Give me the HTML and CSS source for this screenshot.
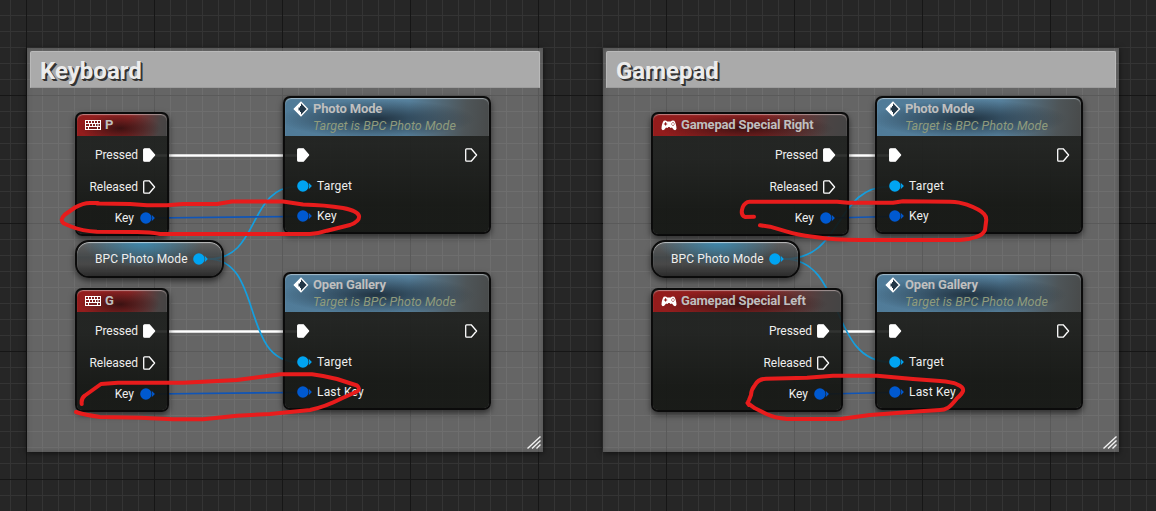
FILE: index.html
```html
<!DOCTYPE html>
<html lang="en">
<head>
<meta charset="utf-8">
<title>Event Graph</title>
<link rel="stylesheet" href="styles.css">
</head>
<body>
<svg class="defs" width="0" height="0" aria-hidden="true">
  <symbol id="exec" viewBox="0 0 13 14"><path d="M1.600 .8H6.200L11.600 7 6.200 13.200H1.600Q.7 13.200 .7 12.300V1.700Q.7.8 1.600.8Z" stroke="#fff" stroke-width="1.300" stroke-linejoin="round"/></symbol>
  <symbol id="data" viewBox="0 0 15 12"><circle cx="5.900" cy="6" r="5.700"/><path d="M11.700 2.700 14.900 6 11.700 9.300Q12.700 6 11.700 2.700Z"/></symbol>
  <symbol id="keyboard" viewBox="0 0 16 10"><path fill="#fff" fill-rule="evenodd" d="M0 0H16V10H0ZM1 1V3H3V1ZM4 1V3H6V1ZM7 1V3H9V1ZM10 1V3H12V1ZM13 1V3H15V1ZM1 4V6H4V4ZM5 4V6H7V4ZM8 4V6H10V4ZM11 4V6H12.500V4ZM13.500 4V6H15V4ZM1 7V9H3V7ZM4 7V9H12V7ZM13 7V9H15V7Z"/></symbol>
  <symbol id="gamepad" viewBox="0 0 16 11"><path fill="#fff" fill-rule="evenodd" d="M2.700.8Q4.800-.2 6.200 1.500H9.800Q11.200-.2 13.300.8C14.500 2.200 15.500 6 15.500 8.700Q14.800 11 12.800 9.700L10.900 7.600Q9.500 8.600 8.600 7H7.400Q6.500 8.600 5.100 7.600L3.200 9.700Q1.200 11 .5 8.700C.5 6 1.500 2.200 2.700.8ZM4 2.300V3.400H2.900V4.500H4V5.600H5.100V4.500H6.200V3.400H5.100V2.300ZM11.500 2V3H12.500V2ZM10.200 3.500V4.500H11.200V3.500ZM12.700 3.500V4.500H13.700V3.500ZM11.500 5V6H12.500V5Z"/></symbol>
  <symbol id="event" viewBox="0 0 16 16"><path d="M8 1.300 14.500 8 8 14.700 1.300 8Z" fill="#233747" stroke="#fff" stroke-width="1.300"/><path d="M8 1V5H7V6.500H5.500V9.500H7V11H8V15L1 8Z" fill="#fff"/></symbol>
</svg>

<main class="graph">
  <section class="comment comment-left"><h2>Keyboard</h2><svg class="grip" viewBox="0 0 14 13"><path d="M.5 12.500 13.500.5M5 12.500 13.500 4.500M9.500 12.500 13.500 8.500"/></svg></section>
  <section class="comment comment-right"><h2>Gamepad</h2><svg class="grip" viewBox="0 0 14 13"><path d="M.5 12.500 13.500.5M5 12.500 13.500 4.500M9.500 12.500 13.500 8.500"/></svg></section>

  <svg class="layer wires" viewBox="0 0 1156 511">
    <g class="wire-exec"><path d="M154 155.500H298M154 331.500H298M834 155.500H890M828 331.500H890"/></g>
    <g class="wire-object">
      <path d="M208 259C262 259 246 186.500 298 186.500"/><path d="M208 259C264 259 240 362 298 362"/>
      <path d="M784 259C845 259 833 186.500 890 186.500"/><path d="M784 259C846 259 828 362 890 362"/>
    </g>
    <g class="wire-key"><path d="M152 218 298 216.500M152 394 298 392.500M832 218 890 216.500M826 394 890 392.500"/></g>
  </svg>

  <article class="node event k-p">
    <header><svg class="kb"><use href="#keyboard"/></svg><b>P</b></header>
    <div class="row">Pressed<svg class="exec on"><use href="#exec"/></svg></div>
    <div class="row">Released<svg class="exec"><use href="#exec"/></svg></div>
    <div class="row">Key<svg class="data key"><use href="#data"/></svg></div>
  </article>
  <article class="node call c-photo-l">
    <header><svg class="ev"><use href="#event"/></svg><div><b>Photo Mode</b><i>Target is BPC Photo Mode</i></div></header>
    <div class="row execs"><svg class="exec on"><use href="#exec"/></svg><svg class="exec"><use href="#exec"/></svg></div>
    <div class="row"><svg class="data object"><use href="#data"/></svg>Target</div>
    <div class="row"><svg class="data key"><use href="#data"/></svg>Key</div>
  </article>
  <article class="pill v-left">BPC Photo Mode<svg class="data object"><use href="#data"/></svg></article>
  <article class="node event k-g">
    <header><svg class="kb"><use href="#keyboard"/></svg><b>G</b></header>
    <div class="row">Pressed<svg class="exec on"><use href="#exec"/></svg></div>
    <div class="row">Released<svg class="exec"><use href="#exec"/></svg></div>
    <div class="row">Key<svg class="data key"><use href="#data"/></svg></div>
  </article>
  <article class="node call c-open-l">
    <header><svg class="ev"><use href="#event"/></svg><div><b>Open Gallery</b><i>Target is BPC Photo Mode</i></div></header>
    <div class="row execs"><svg class="exec on"><use href="#exec"/></svg><svg class="exec"><use href="#exec"/></svg></div>
    <div class="row"><svg class="data object"><use href="#data"/></svg>Target</div>
    <div class="row"><svg class="data key"><use href="#data"/></svg>Last Key</div>
  </article>

  <article class="node event g-right">
    <header><svg class="gp"><use href="#gamepad"/></svg><b>Gamepad Special Right</b></header>
    <div class="row">Pressed<svg class="exec on"><use href="#exec"/></svg></div>
    <div class="row">Released<svg class="exec"><use href="#exec"/></svg></div>
    <div class="row">Key<svg class="data key"><use href="#data"/></svg></div>
  </article>
  <article class="node call c-photo-r">
    <header><svg class="ev"><use href="#event"/></svg><div><b>Photo Mode</b><i>Target is BPC Photo Mode</i></div></header>
    <div class="row execs"><svg class="exec on"><use href="#exec"/></svg><svg class="exec"><use href="#exec"/></svg></div>
    <div class="row"><svg class="data object"><use href="#data"/></svg>Target</div>
    <div class="row"><svg class="data key"><use href="#data"/></svg>Key</div>
  </article>
  <article class="pill v-right">BPC Photo Mode<svg class="data object"><use href="#data"/></svg></article>
  <article class="node event g-left">
    <header><svg class="gp"><use href="#gamepad"/></svg><b>Gamepad Special Left</b></header>
    <div class="row">Pressed<svg class="exec on"><use href="#exec"/></svg></div>
    <div class="row">Released<svg class="exec"><use href="#exec"/></svg></div>
    <div class="row">Key<svg class="data key"><use href="#data"/></svg></div>
  </article>
  <article class="node call c-open-r">
    <header><svg class="ev"><use href="#event"/></svg><div><b>Open Gallery</b><i>Target is BPC Photo Mode</i></div></header>
    <div class="row execs"><svg class="exec on"><use href="#exec"/></svg><svg class="exec"><use href="#exec"/></svg></div>
    <div class="row"><svg class="data object"><use href="#data"/></svg>Target</div>
    <div class="row"><svg class="data key"><use href="#data"/></svg>Last Key</div>
  </article>

  <svg class="layer marks" viewBox="0 0 1156 511">
    <path d="M98 203H90Q83 203 75 207.500L65 214.500Q59 220 64 223.500L71 226.500Q82 231 97 231.700L137 232Q150 232 160 234H310Q319 233.500 327 230.700L350 225Q360 221 359 216Q358 211 343 208Q325 205 303 204.500L283 201.500H232L217 204H183L167 205.300H147L130 204 97 203.500"/>
    <path d="M81.700 404Q81 398 85 395.500L101 384 118 382.700H183L203 381.700 237 380 277 374.700 281 374.300H312Q325 376 337 379L357 385.500Q361 389 357 391.500L342 398.300Q325 407 310 410L270 414 237 415.700 203 419.300H173L140 417.700 100 417Q85 415 76 412"/>
    <path d="M754 216.700 745 217Q740 215 742.700 207.300 745 202 749.500 201.700H837L848 202.700H893L903 201.300 950 201.700Q960 202 967 204.700 980 209.500 984 214 987 217 986 222L985 230Q983 235 976 237 968 240 960 240H860Q835 240 813 236.700 797 235 787 231.700L770 226.700 760 225.300"/>
    <path d="M749 405Q747 403 749 400L751 395Q751 390 755 385 758 379 766 378.700L807 377.700 833 375.700H877L913 379 940 381Q952 382 957 384.300 964 387 963 391 962 394 957 398.300 951 406 948 407.700 944 410 940 410L920 411.300 870 415 840 419H787Q775 418 767 414.300L755 408.300 747.500 403"/>
  </svg>
</main>
</body>
</html>
```
FILE: styles.css
```css
* { box-sizing: border-box; }
body { margin: 0; overflow: hidden; font-family: Roboto, sans-serif; }
svg { display: block; }
.defs { position: absolute; }

.graph {
  position: relative;
  width: 1156px;
  height: 511px;
  overflow: hidden;
  color: #eee;
  font-size: 12px;
  background:
    linear-gradient(90deg, #161616 1px, transparent 1px) 26px 0 / 128px 128px,
    linear-gradient(#161616 1px, transparent 1px) 0 95px / 128px 128px,
    linear-gradient(90deg, #343434 1px, transparent 1px) 10px 0 / 16px 16px,
    linear-gradient(#343434 1px, transparent 1px) 0 15px / 16px 16px,
    #262626;
}

.layer { position: absolute; inset: 0; width: 1156px; height: 511px; fill: none; }
.wire-exec { stroke: #fff; stroke-width: 2.6; }
.wire-object { stroke: #159fdf; stroke-width: 1.7; }
.wire-key { stroke: #0f55b8; stroke-width: 1.7; }
.marks { stroke: #e81c1c; stroke-width: 4; stroke-linecap: round; stroke-linejoin: round; }

.comment {
  position: absolute;
  top: 48px;
  width: 516px;
  height: 404px;
  padding: 3px;
  background: rgba(230, 230, 230, .33);
  box-shadow: 0 1px 6px rgba(0, 0, 0, .6), inset 0 0 5px rgba(40, 40, 40, .35);
}
.comment-left { left: 27px; }
.comment-right { left: 603px; }
.comment h2 {
  margin: 0;
  height: 37px;
  padding-left: 9px;
  border: 1px solid #b9b9b9;
  border-bottom-color: #9d9d9d;
  border-radius: 2px 2px 0 0;
  background: #aaa;
  color: #ececec;
  font-size: 24px;
  line-height: 38px;
  text-shadow: 1px 1px 0 #333, 2px 2px 0 #333;
}
.grip { position: absolute; right: 2px; bottom: 3px; width: 14px; height: 13px; fill: none; stroke: #f2f2f2; stroke-width: 1.4; }

.node {
  position: absolute;
  border: 2px solid #0b0b0b;
  border-radius: 7px;
  background: linear-gradient(rgba(29, 31, 29, .91), rgba(29, 31, 29, .91) 35%, rgba(19, 21, 18, .92) 80%);
  background-clip: padding-box;
  box-shadow: 0 3px 6px rgba(0, 0, 0, .55);
}
.node header {
  display: flex;
  border-radius: 6px 6px 0 0;
  margin-bottom: 3px;
  color: #bfbfbf;
  font-size: 13px;
}
.node b { display: block; font-weight: 700; letter-spacing: -.17px; white-space: nowrap; }
.node i { display: block; color: #8f9b7c; white-space: nowrap; font-size: 12.5px; letter-spacing: .05px; }
.row { display: flex; align-items: center; white-space: nowrap; }

.event { height: 124px; }
.event header {
  height: 22px;
  padding-left: 8px;
  align-items: center;
  background:
    radial-gradient(ellipse 45% 65% at 48% 65%, rgba(30, 12, 12, .75), transparent),
    linear-gradient(100deg, #941b1b, #902525 55%, #4a4444 90%, #444);
  box-shadow: inset 0 1px 1px rgba(220, 200, 200, .6);
}
.event header b { line-height: 22px; }
.event .row { height: 32px; justify-content: flex-end; padding-right: 11px; letter-spacing: -.05px; }
.event .row .exec { margin-left: 5px; }
.event .row .data { margin-left: 6px; }
.event .row:last-child { height: 30px; padding-right: 12px; }

.call { width: 208px; height: 138px; }
.call header {
  height: 38px;
  padding-left: 8px;
  background:
    radial-gradient(ellipse 48% 50% at 45% 55%, rgba(24, 38, 50, .85), transparent),
    linear-gradient(95deg, #507b98, #56809c 60%, #4e5558 88%, #484a4a);
  box-shadow: inset 0 1px 1px rgba(220, 230, 235, .6);
}
.call header b { line-height: 16px; padding-top: 3px; }
.call header i { line-height: 18px; }
.call .row { height: 30px; padding-left: 12px; letter-spacing: .18px; }
.call .row.execs { height: 32px; justify-content: space-between; padding-right: 11px; }
.call .data { margin-right: 5px; }

.pill {
  position: absolute;
  top: 240px;
  width: 149px;
  height: 38px;
  display: flex;
  align-items: center;
  padding-left: 18px;
  border: 2px solid #0b0b0b;
  border-radius: 14px;
  background:
    radial-gradient(ellipse 42% 75% at 45% 0, rgba(50, 150, 200, .75), transparent),
    linear-gradient(rgba(95, 95, 95, .8), rgba(60, 65, 67, .8) 45%, rgba(66, 66, 66, .82) 65%, rgba(36, 36, 36, .88));
  background-clip: padding-box;
  box-shadow: inset 0 1px 1px rgba(255, 255, 255, .6), 0 3px 6px rgba(0, 0, 0, .55);
  letter-spacing: .12px;
}
.pill .data { margin-left: 5px; }

.kb { width: 16px; height: 10px; margin-right: 4px; }
.gp { width: 16px; height: 11px; margin-right: 4px; }
.ev { width: 16px; height: 16px; margin: 3px 4px 0 0; }
.exec { width: 13px; height: 14px; fill: none; }
.exec.on { fill: #fff; }
.data { width: 15px; height: 12px; }
.key { fill: #0059d0; }
.object { fill: #00a4f2; }

.k-p { left: 75px; top: 112px; width: 94px; }
.k-g { left: 75px; top: 288px; width: 94px; }
.g-right { left: 651px; top: 112px; width: 198px; }
.g-left { left: 651px; top: 288px; width: 192px; }
.c-photo-l { left: 283px; top: 96px; }
.c-open-l { left: 283px; top: 272px; }
.c-photo-r { left: 875px; top: 96px; }
.c-open-r { left: 875px; top: 272px; }
.v-left { left: 75px; }
.v-right { left: 651px; }
```
